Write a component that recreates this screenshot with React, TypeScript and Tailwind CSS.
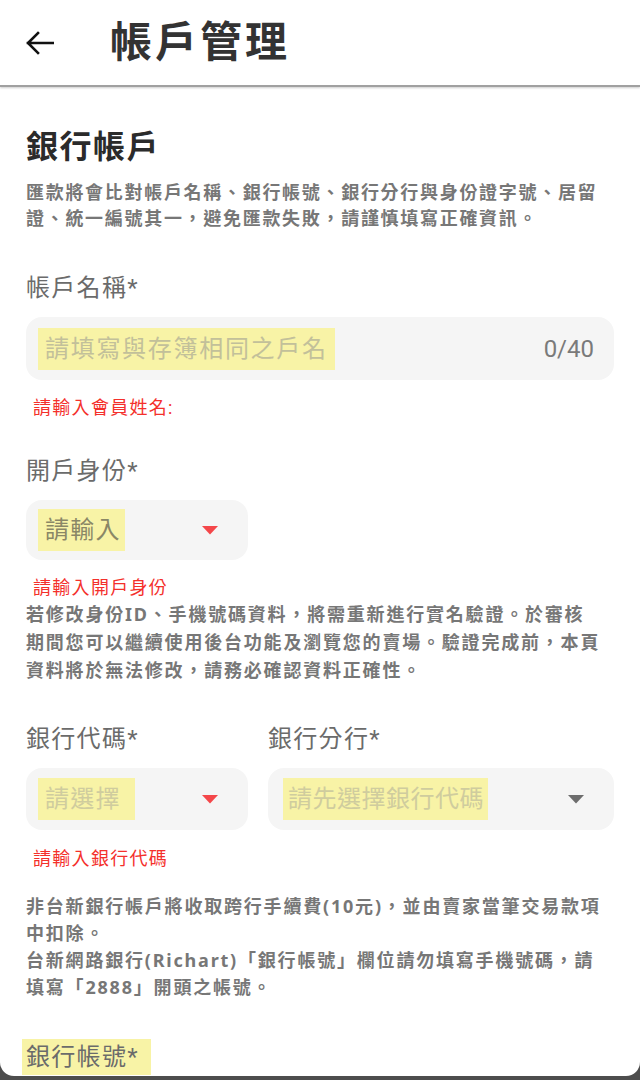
import React from "react";

const font = { fontFamily: 'Roboto, "Noto Sans CJK TC", sans-serif' };
const noteFont = { fontFamily: '"Noto Sans", "Noto Sans CJK TC", sans-serif' };

function Caret({ color }: { color: string }) {
  return (
    <svg width="16" height="9" viewBox="0 0 16 9" className="shrink-0">
      <path d="M0 0 H16 L8 8.5 Z" fill={color} />
    </svg>
  );
}

function Label({ text, highlight }: { text: string; highlight?: boolean }) {
  return (
    <div className="text-[24px] leading-[32px] tracking-[1.3px] text-[#6b6b6b]">
      {highlight ? (
        <span className="-ml-[4px] bg-[#f8f3a6] py-[4px] pl-[4px] pr-[12px]">{text}</span>
      ) : (
        text
      )}
    </div>
  );
}

function ErrorText({ text }: { text: string }) {
  return (
    <div className="pl-[7px] text-[18px] leading-[24px] tracking-[1.3px] text-[#f4302b]">
      {text}
    </div>
  );
}

function Note({ lines, className }: { lines: string[]; className: string }) {
  return (
    <div className={`text-[18px] font-bold tracking-[1.8px] text-[#777] ${className}`} style={noteFont}>
      {lines.map((l) => (
        <div key={l} className="whitespace-nowrap">
          {l}
        </div>
      ))}
    </div>
  );
}

export default function App() {
  return (
    <div className="h-[1080px] overflow-hidden bg-[#4d4d4d]" style={font}>
      <div className="h-[1076px] overflow-hidden rounded-b-[14px] bg-white">
        {/* Header */}
        <header className="flex h-[87px] items-center border-b-2 border-[#a0a0a0] shadow-[0_1px_2px_rgba(0,0,0,0.2)]">
          <div className="ml-[26px] w-[84px]">
            <svg width="28" height="24" viewBox="0 0 28 24" fill="none">
              <path
                d="M27 12H2M12 2L2 12l10 10"
                stroke="#111"
                strokeWidth="2.6"
                strokeLinecap="square"
              />
            </svg>
          </div>
          <h1 className="text-[42px] font-bold leading-none tracking-[3px] text-[#333]">
            帳戶管理
          </h1>
        </header>

        <main className="px-[26px]">
          <h2 className="mt-[40px] text-[32px] font-bold leading-[40px] tracking-[1.5px] text-[#2b2b2b]">
            銀行帳戶
          </h2>
          <p
            className="mt-[12px] text-[18px] font-bold leading-[26px] tracking-[1.7px] text-[#777]"
            style={noteFont}
          >
            匯款將會比對帳戶名稱、銀行帳號、銀行分行與身份證字號、居留證、統一編號其一，避免匯款失敗，請謹慎填寫正確資訊。
          </p>

          {/* Account name */}
          <div className="mt-[41px]">
            <Label text="帳戶名稱*" />
          </div>
          <div className="mt-[13px] flex h-[63px] items-center rounded-[16px] bg-[#f5f5f5] pl-[12px] pr-[20px]">
            <span className="bg-[#f8f3a6] px-[7px] py-[5px] text-[24px] leading-[32px] tracking-[1.7px] text-[#c2c09a]">
              請填寫與存簿相同之戶名
            </span>
            <span className="ml-auto text-[24px] text-[#7a7a7a]">0/40</span>
          </div>
          <div className="mt-[16px]">
            <ErrorText text="請輸入會員姓名:" />
          </div>

          {/* Identity */}
          <div className="mt-[35px]">
            <Label text="開戶身份*" />
          </div>
          <div className="mt-[13px] flex h-[60px] w-[222px] items-center rounded-[16px] bg-[#f5f5f5] pl-[12px] pr-[30px]">
            <span className="bg-[#f8f3a6] py-[5px] pl-[7px] pr-[4px] text-[24px] leading-[32px] tracking-[1.2px] text-[#8a8766]">
              請輸入
            </span>
            <span className="ml-auto">
              <Caret color="#f4474a" />
            </span>
          </div>
          <div className="mt-[16px]">
            <ErrorText text="請輸入開戶身份" />
          </div>
          <Note
            className="leading-[28px]"
            lines={[
              "若修改身份ID、手機號碼資料，將需重新進行實名驗證。於審核",
              "期間您可以繼續使用後台功能及瀏覽您的賣場。驗證完成前，本頁",
              "資料將於無法修改，請務必確認資料正確性。",
            ]}
          />

          {/* Bank code / branch */}
          <div className="mt-[39px] flex gap-[20px]">
            <div className="w-[222px] shrink-0">
              <Label text="銀行代碼*" />
              <div className="mt-[13px] flex h-[62px] items-center rounded-[16px] bg-[#f5f5f5] pl-[12px] pr-[30px]">
                <span className="bg-[#f8f3a6] py-[5px] pl-[7px] pr-[14px] text-[24px] leading-[32px] tracking-[1.2px] text-[#cfcc9e]">
                  請選擇
                </span>
                <span className="ml-auto">
                  <Caret color="#f4474a" />
                </span>
              </div>
            </div>
            <div className="flex-1">
              <Label text="銀行分行*" />
              <div className="mt-[13px] flex h-[62px] items-center rounded-[16px] bg-[#f5f5f5] pl-[15px] pr-[30px]">
                <span className="bg-[#f8f3a6] py-[5px] pl-[5px] pr-[4px] text-[24px] leading-[32px] tracking-[0.5px] text-[#cfcc9e]">
                  請先選擇銀行代碼
                </span>
                <span className="ml-auto">
                  <Caret color="#6d6d6d" />
                </span>
              </div>
            </div>
          </div>
          <div className="mt-[17px]">
            <ErrorText text="請輸入銀行代碼" />
          </div>
          <Note
            className="mt-[22px] leading-[27px]"
            lines={[
              "非台新銀行帳戶將收取跨行手續費(10元)，並由賣家當筆交易款項",
              "中扣除。",
              "台新網路銀行(Richart)「銀行帳號」欄位請勿填寫手機號碼，請",
              "填寫「2888」開頭之帳號。",
            ]}
          />

          <div className="mt-[40px]">
            <Label text="銀行帳號*" highlight />
          </div>
        </main>
      </div>
    </div>
  );
}
